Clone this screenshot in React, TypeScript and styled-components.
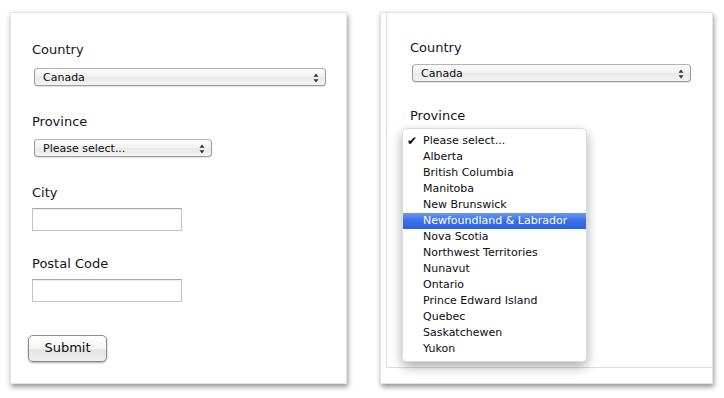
import React from 'react';
import styled, { createGlobalStyle } from 'styled-components';

const GlobalStyle = createGlobalStyle`
  html, body {
    margin: 0;
    padding: 0;
    background: #ffffff;
  }
  body {
    font-family: "DejaVu Sans", "Liberation Sans", sans-serif;
    color: #111118;
  }
`;

const Page = styled.div`
  display: flex;
  align-items: flex-start;
  gap: 33px;
  padding: 12px 0 0 10px;
  width: 724px;
  height: 398px;
  box-sizing: border-box;
`;

const Panel = styled.div<{ $width: number }>`
  position: relative;
  width: ${(p) => p.$width}px;
  height: 372px;
  box-sizing: border-box;
  background: #ffffff;
  border: 1px solid #e2e2e2;
  box-shadow: 1px 3px 5px rgba(0, 0, 0, 0.42);
`;

const FormBody = styled.div<{ $left: number; $top: number }>`
  display: flex;
  flex-direction: column;
  align-items: flex-start;
  padding: ${(p) => p.$top}px 0 0 ${(p) => p.$left}px;
`;

const Backdrop = styled.div`
  height: 355px;
  margin-left: 5px;
  border-left: 1px solid #dedede;
  border-bottom: 1px solid #dedede;
  box-sizing: border-box;
`;

const Field = styled.div<{ $after: number }>`
  position: relative;
  display: flex;
  flex-direction: column;
  align-items: flex-start;
  margin-bottom: ${(p) => p.$after}px;
`;

const Label = styled.label<{ $gap: number }>`
  font-size: 13px;
  line-height: 16px;
  margin-bottom: ${(p) => p.$gap}px;
  margin-left: -2px;
  color: #14141e;
`;

const SelectBox = styled.div<{ $width: number }>`
  position: relative;
  display: flex;
  align-items: center;
  width: ${(p) => p.$width}px;
  height: 18px;
  box-sizing: border-box;
  padding-left: 8px;
  border: 1px solid #9a9a9a;
  border-top-color: #b4b4b4;
  border-radius: 4px;
  background: linear-gradient(#fbfbfb, #f1f1f1 50%, #e9e9e9 51%, #f3f3f3);
  box-shadow: 0 1px 1px rgba(0, 0, 0, 0.12);
  font-size: 11px;
  color: #0c0c10;
`;

const Arrows = styled.svg`
  position: absolute;
  right: 6px;
  top: 4px;
`;

const TextInput = styled.div`
  width: 150px;
  height: 23px;
  margin-left: -2px;
  box-sizing: border-box;
  border: 1px solid #c4c4c4;
  border-top-color: #a8a8a8;
  background: #fff;
  box-shadow: inset 0 1px 1px rgba(0, 0, 0, 0.08);
`;

const SubmitButton = styled.button`
  width: 79px;
  height: 27px;
  margin-left: -6px;
  padding: 0 0 2px;
  border: 1px solid #8c8c8c;
  border-radius: 5px;
  background: linear-gradient(#ffffff, #f4f4f4 50%, #e4e4e4 51%, #eeeeee);
  box-shadow: 0 1px 2px rgba(0, 0, 0, 0.35);
  font-family: "DejaVu Sans", "Liberation Sans", sans-serif;
  font-size: 13px;
  color: #0c0c10;
`;

const Menu = styled.ul`
  position: absolute;
  top: 20px;
  left: -10px;
  width: 183px;
  margin: 0;
  padding: 4px 0;
  list-style: none;
  background: rgba(255, 255, 255, 0.98);
  border: 1px solid #dcdcdc;
  border-radius: 5px;
  box-shadow: 0 5px 12px rgba(0, 0, 0, 0.33);
  z-index: 2;
`;

const MenuItem = styled.li<{ $active?: boolean }>`
  position: relative;
  height: 16px;
  line-height: 16px;
  padding-left: 20px;
  font-size: 11px;
  color: ${(p) => (p.$active ? '#ffffff' : '#0c0c10')};
  background: ${(p) => (p.$active ? 'linear-gradient(#6a98f2, #3a6fe6 50%, #2d62e0)' : 'transparent')};
`;

const Check = styled.span`
  position: absolute;
  left: 4px;
  top: 0;
  font-size: 12px;
  font-weight: bold;
`;

const provinces = [
  'Please select...',
  'Alberta',
  'British Columbia',
  'Manitoba',
  'New Brunswick',
  'Newfoundland & Labrador',
  'Nova Scotia',
  'Northwest Territories',
  'Nunavut',
  'Ontario',
  'Prince Edward Island',
  'Quebec',
  'Saskatchewen',
  'Yukon',
];

const Select: React.FC<{ width: number; value: string }> = ({ width, value }) => (
  <SelectBox $width={width}>
    {value}
    <Arrows width="6" height="10" viewBox="0 0 6 10">
      <path d="M3 0.5 L5.5 3.8 L0.5 3.8 Z" fill="#333" />
      <path d="M3 9.5 L5.5 6.2 L0.5 6.2 Z" fill="#333" />
    </Arrows>
  </SelectBox>
);

const App: React.FC = () => {
  return (
    <>
      <GlobalStyle />
      <Page>
        <Panel $width={337}>
          <FormBody $left={23} $top={29}>
            <Field $after={28}>
              <Label $gap={10}>Country</Label>
              <Select width={292} value="Canada" />
            </Field>
            <Field $after={28}>
              <Label $gap={9}>Province</Label>
              <Select width={178} value="Please select..." />
            </Field>
            <Field $after={25}>
              <Label $gap={7}>City</Label>
              <TextInput />
            </Field>
            <Field $after={33}>
              <Label $gap={7}>Postal Code</Label>
              <TextInput />
            </Field>
            <SubmitButton>Submit</SubmitButton>
          </FormBody>
        </Panel>

        <Panel $width={333}>
          <Backdrop>
            <FormBody $left={25} $top={27}>
              <Field $after={26}>
                <Label $gap={8}>Country</Label>
                <Select width={279} value="Canada" />
              </Field>
              <Field $after={0}>
                <Label $gap={8}>Province</Label>
                <Menu>
                  {provinces.map((name) => (
                    <MenuItem key={name} $active={name === 'Newfoundland & Labrador'}>
                      {name === 'Please select...' && <Check>✔</Check>}
                      {name}
                    </MenuItem>
                  ))}
                </Menu>
              </Field>
            </FormBody>
          </Backdrop>
        </Panel>
      </Page>
    </>
  );
};

export default App;
